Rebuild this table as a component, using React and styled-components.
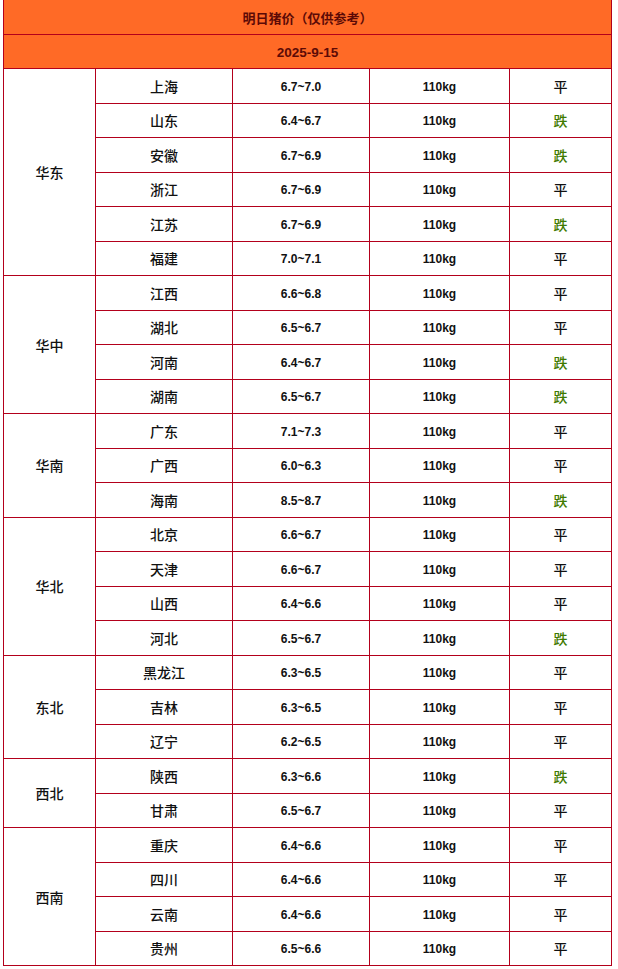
import React from "react";
import styled, { createGlobalStyle } from "styled-components";

const Global = createGlobalStyle`
  html, body { margin: 0; padding: 0; background: #ffffff; }
  body { width: 618px; height: 969px; overflow: hidden; }
`;

const Page = styled.div`
  padding: 0 6px 0 3px;
  width: 618px;
  box-sizing: border-box;
`;

const Grid = styled.div`
  display: grid;
  grid-template-columns: 91px 136px 136px 139px 101px;
  grid-template-rows: 34px 33px repeat(26, 33.5px);
  gap: 1px;
  padding: 0 1px 1px 1px;
  background: #b3001b;
  width: 609px;
  box-sizing: border-box;
`;

const HeaderCell = styled.div`
  grid-column: 1 / -1;
  background: #ff6a26;
  display: flex;
  align-items: center;
  justify-content: center;
  color: #5c0a06;
  font-family: "Noto Sans CJK SC", "DejaVu Sans", sans-serif;
  font-weight: 700;
  font-size: 13px;
`;

const DateCell = styled(HeaderCell)`
  font-family: "Liberation Sans", "Noto Sans CJK SC", sans-serif;
  font-size: 13.5px;
  padding-top: 1px;
`;

const Cell = styled.div`
  background: #ffffff;
  display: flex;
  align-items: center;
  justify-content: center;
  color: ${(p) => (p.$down ? "#3f7a00" : "#111111")};
  font-family: ${(p) =>
    p.$num
      ? `"Liberation Sans", "Noto Sans CJK SC", sans-serif`
      : `"Noto Sans CJK SC", sans-serif`};
  font-size: ${(p) => (p.$num ? "12px" : "14px")};
  font-weight: ${(p) => (p.$num ? 700 : 500)};
  padding-top: ${(p) => (p.$num ? "2px" : "0")};
`;

const RegionCell = styled(Cell)`
  grid-row: span ${(p) => p.$span};
`;

const data = [
  ["华东", [
    ["上海", "6.7~7.0", "平"],
    ["山东", "6.4~6.7", "跌"],
    ["安徽", "6.7~6.9", "跌"],
    ["浙江", "6.7~6.9", "平"],
    ["江苏", "6.7~6.9", "跌"],
    ["福建", "7.0~7.1", "平"],
  ]],
  ["华中", [
    ["江西", "6.6~6.8", "平"],
    ["湖北", "6.5~6.7", "平"],
    ["河南", "6.4~6.7", "跌"],
    ["湖南", "6.5~6.7", "跌"],
  ]],
  ["华南", [
    ["广东", "7.1~7.3", "平"],
    ["广西", "6.0~6.3", "平"],
    ["海南", "8.5~8.7", "跌"],
  ]],
  ["华北", [
    ["北京", "6.6~6.7", "平"],
    ["天津", "6.6~6.7", "平"],
    ["山西", "6.4~6.6", "平"],
    ["河北", "6.5~6.7", "跌"],
  ]],
  ["东北", [
    ["黑龙江", "6.3~6.5", "平"],
    ["吉林", "6.3~6.5", "平"],
    ["辽宁", "6.2~6.5", "平"],
  ]],
  ["西北", [
    ["陕西", "6.3~6.6", "跌"],
    ["甘肃", "6.5~6.7", "平"],
  ]],
  ["西南", [
    ["重庆", "6.4~6.6", "平"],
    ["四川", "6.4~6.6", "平"],
    ["云南", "6.4~6.6", "平"],
    ["贵州", "6.5~6.6", "平"],
  ]],
];

export default function App() {
  return (
    <Page>
      <Global />
      <Grid>
        <HeaderCell>明日猪价（仅供参考）</HeaderCell>
        <DateCell>2025-9-15</DateCell>
        {data.map(([region, rows]) => (
          <React.Fragment key={region}>
            {rows.map(([prov, price, trend], i) => (
              <React.Fragment key={prov}>
                {i === 0 && <RegionCell $span={rows.length}>{region}</RegionCell>}
                <Cell>{prov}</Cell>
                <Cell $num>{price}</Cell>
                <Cell $num>110kg</Cell>
                <Cell $down={trend === "跌"}>{trend}</Cell>
              </React.Fragment>
            ))}
          </React.Fragment>
        ))}
      </Grid>
    </Page>
  );
}
